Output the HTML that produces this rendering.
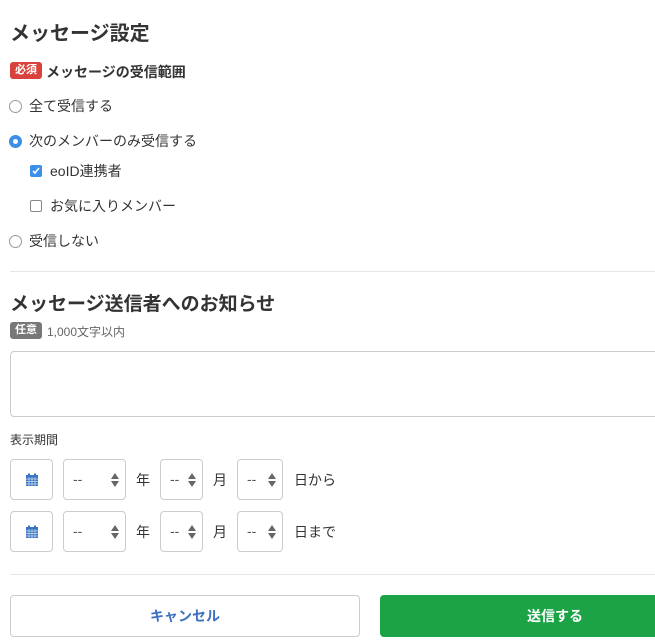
<!DOCTYPE html>
<html><head><meta charset="utf-8"><style>
*{box-sizing:border-box;margin:0;padding:0}
body{width:655px;height:641px;overflow:hidden;background:#fff;font-family:"Liberation Sans","Noto Sans CJK JP",sans-serif;color:#333;position:relative}
.a{position:absolute;white-space:nowrap}
.h{font-size:20px;font-weight:bold;color:#333}
.badge{font-size:11px;font-weight:bold;color:#fff;padding:2px 5px;border-radius:3px;line-height:13px}
.t{font-size:14px}
.radio{width:13px;height:13px;border:1px solid #999;border-radius:50%;background:#fff}
.cb{width:12px;height:12px;border:1px solid #888;border-radius:2px;background:#fff}
.box{border:1px solid #ccc;border-radius:4px;background:#fff}
.sel{border:1px solid #ccc;border-radius:4px;height:41px;font-size:14px;color:#555}
.sel span{position:absolute;left:9px;top:11px}
.arr{position:absolute;right:6px;top:13px;width:8px;height:14px}
hr{position:absolute;border:0;border-top:1px solid #e5e5e5;left:10px;right:0}
</style></head><body>
<div class="a h" style="left:10px;top:17px">メッセージ設定</div>
<div class="a badge" style="left:10px;top:62px;background:#d9413c">必須</div>
<div class="a" style="left:46px;top:62px;font-size:14px;font-weight:bold">メッセージの受信範囲</div>
<div class="a radio" style="left:9px;top:100px"></div><div class="a t" style="left:29px;top:96px">全て受信する</div>
<div class="a radio" style="left:9px;top:135px;background:#3b8fe8;border-color:#3b8fe8"><div style="width:5px;height:5px;background:#fff;border-radius:50%;margin:3px"></div></div><div class="a t" style="left:29px;top:131px">次のメンバーのみ受信する</div>
<div class="a cb" style="left:30px;top:165px;background:#3b8fe8;border-color:#3b8fe8"><svg width="10" height="10" viewBox="0 0 10 10" style="display:block"><path d="M2 5l2 2 4-5" stroke="#fff" stroke-width="1.6" fill="none"/></svg></div><div class="a t" style="left:50px;top:161px">eoID連携者</div>
<div class="a cb" style="left:30px;top:200px"></div><div class="a t" style="left:50px;top:196px">お気に入りメンバー</div>
<div class="a radio" style="left:9px;top:235px"></div><div class="a t" style="left:29px;top:231px">受信しない</div>
<hr style="top:271px">
<div class="a h" style="left:10px;top:289px;font-size:19px">メッセージ送信者へのお知らせ</div>
<div class="a badge" style="left:10px;top:322px;background:#777">任意</div>
<div class="a" style="left:47px;top:323px;font-size:12px;color:#666">1,000文字以内</div>
<div class="a box" style="left:10px;top:351px;width:660px;height:66px"></div>
<div class="a" style="left:10px;top:431px;font-size:12px">表示期間</div>
<div id="r1"></div>
<script>
function row(y,end){
 var s='';
 s+='<div class="a box" style="left:10px;top:'+y+'px;width:43px;height:41px"><svg width="14" height="14" viewBox="0 0 14 14" style="position:absolute;left:14px;top:13px"><rect x="1" y="2" width="12" height="11" fill="#3a75c4"/><rect x="3" y="0.5" width="2" height="3" fill="#3a75c4"/><rect x="9" y="0.5" width="2" height="3" fill="#3a75c4"/><path d="M1 6h12M1 8.5h12M1 11h12M4 4v9M7 4v9M10 4v9" stroke="#cde" stroke-width="0.7"/></svg></div>';
 var arr='<svg class="arr" viewBox="0 0 8 14"><path d="M0 6L4 0 8 6z M0 8L4 14 8 8z" fill="#666"/></svg>';
 s+='<div class="a sel" style="left:63px;top:'+y+'px;width:63px"><span>--</span>'+arr+'</div>';
 s+='<div class="a t" style="left:136px;top:'+(y+11)+'px">年</div>';
 s+='<div class="a sel" style="left:160px;top:'+y+'px;width:43px"><span>--</span>'+arr+'</div>';
 s+='<div class="a t" style="left:213px;top:'+(y+11)+'px">月</div>';
 s+='<div class="a sel" style="left:237px;top:'+y+'px;width:46px"><span>--</span>'+arr+'</div>';
 s+='<div class="a t" style="left:294px;top:'+(y+11)+'px">'+end+'</div>';
 return s;
}
document.getElementById('r1').innerHTML=row(459,'日から')+row(511,'日まで');
</script>
<hr style="top:574px">
<div class="a box" style="left:10px;top:595px;width:350px;height:42px;text-align:center;line-height:40px;font-size:14px;font-weight:bold;color:#3a6fc1">キャンセル</div>
<div class="a" style="left:380px;top:595px;width:350px;height:42px;background:#1ba345;border-radius:4px;text-align:center;line-height:42px;font-size:14px;font-weight:bold;color:#fff">送信する</div>
</body></html>
